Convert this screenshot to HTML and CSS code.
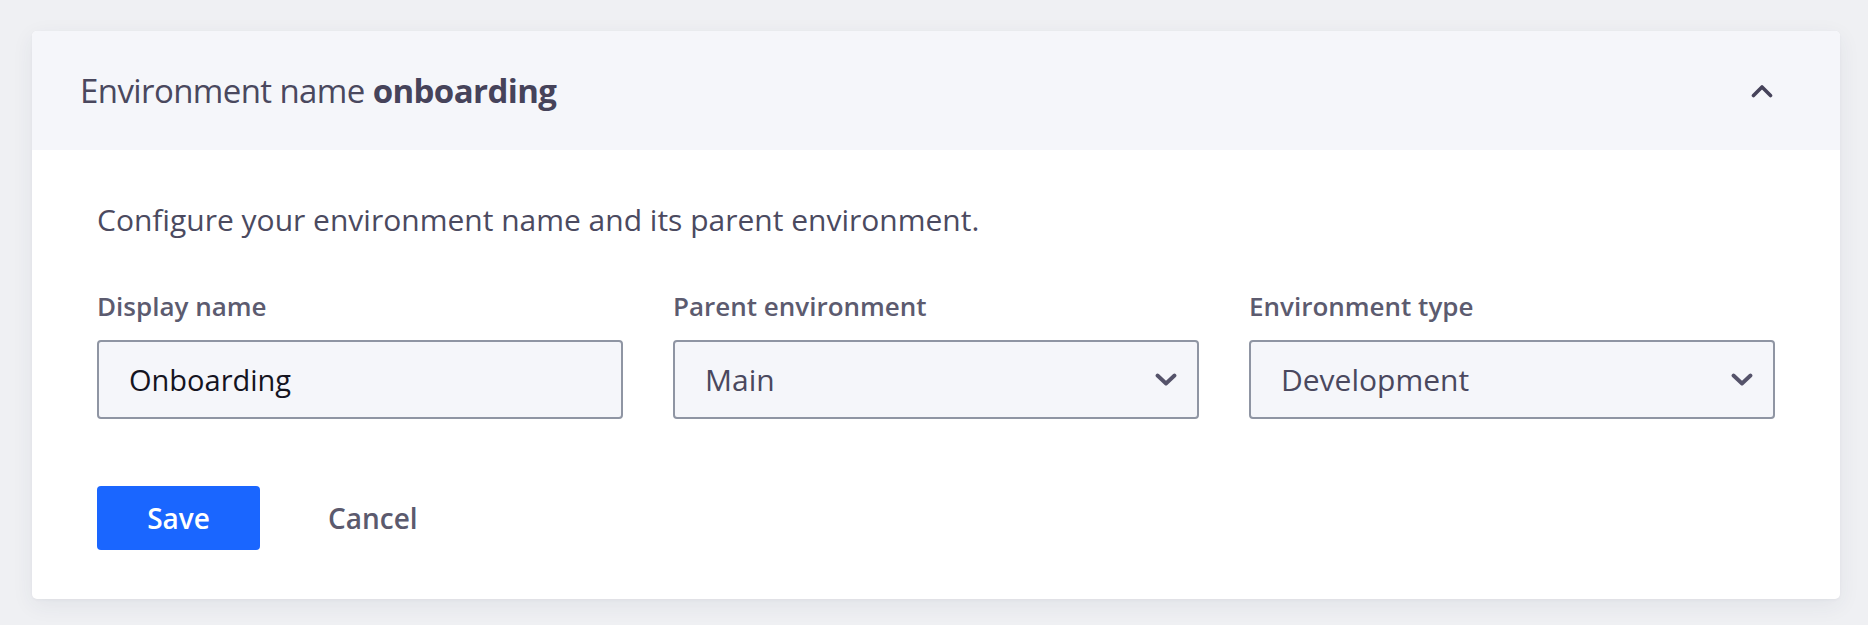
FILE: index.html
```html
<!DOCTYPE html>
<html lang="en">
<head>
<meta charset="utf-8">
<title>Environment settings</title>
<link rel="stylesheet" href="styles.css">
</head>
<body>
<section class="card">
  <header class="card-header">
    <h2 class="title">Environment name <strong>onboarding</strong></h2>
    <svg class="collapse-icon" width="22" height="14" viewBox="0 0 22 14" aria-hidden="true">
      <path d="M2.5 11.5 L11 3 L19.5 11.5" fill="none" stroke="#46435a" stroke-width="3.6" stroke-linecap="round" stroke-linejoin="round"/>
    </svg>
  </header>
  <div class="card-body">
    <p class="description">Configure your environment name and its parent environment.</p>
    <div class="fields">
      <div class="field">
        <div class="label">Display name</div>
        <div class="control input">Onboarding</div>
      </div>
      <div class="field">
        <div class="label">Parent environment</div>
        <div class="control select">
          <span>Main</span>
          <svg class="select-icon" width="22" height="14" viewBox="0 0 22 14" aria-hidden="true">
            <path d="M2.5 2.5 L11 10.5 L19.5 2.5" fill="none" stroke="#55536a" stroke-width="3.8" stroke-linecap="round" stroke-linejoin="round"/>
          </svg>
        </div>
      </div>
      <div class="field">
        <div class="label">Environment type</div>
        <div class="control select">
          <span>Development</span>
          <svg class="select-icon" width="22" height="14" viewBox="0 0 22 14" aria-hidden="true">
            <path d="M2.5 2.5 L11 10.5 L19.5 2.5" fill="none" stroke="#55536a" stroke-width="3.8" stroke-linecap="round" stroke-linejoin="round"/>
          </svg>
        </div>
      </div>
    </div>
    <div class="actions">
      <button class="btn btn-primary" type="button">Save</button>
      <button class="btn btn-link" type="button">Cancel</button>
    </div>
  </div>
</section>
</body>
</html>
```

FILE: styles.css
```css
html, body {
  margin: 0;
  padding: 0;
}

body {
  background: #eff0f3;
  font-family: "Open Sans", "Noto Sans", sans-serif;
  color: #4a485e;
  height: 625px;
  overflow: hidden;
}

.card {
  margin: 31px 28px 0 32px;
  background: #ffffff;
  border-radius: 5px;
  box-shadow: 0 6px 22px rgba(40, 50, 80, 0.07), 0 1px 3px rgba(40, 50, 80, 0.04);
  overflow: hidden;
}

.card-header {
  height: 119px;
  box-sizing: border-box;
  background: #f5f6fa;
  display: flex;
  align-items: center;
  justify-content: space-between;
  padding: 0 67px 0 48px;
}

.title {
  margin: 0;
  font-size: 33px;
  line-height: 44px;
  font-weight: 400;
  letter-spacing: -0.6px;
  color: #4a485e;
}

.title strong {
  font-weight: 700;
  color: #46435a;
}

.collapse-icon {
  display: block;
}

.card-body {
  padding: 50px 65px 49px 65px;
}

.description {
  margin: 0;
  font-size: 30px;
  line-height: 40px;
  color: #4b4a5f;
}

.fields {
  display: grid;
  grid-template-columns: repeat(3, 1fr);
  column-gap: 50px;
  margin-top: 48px;
}

.field {
  display: flex;
  flex-direction: column;
  gap: 16px;
}

.label {
  font-size: 26px;
  line-height: 36px;
  font-weight: 600;
  color: #5c5b6f;
}

.control {
  height: 79px;
  box-sizing: border-box;
  border: 2px solid #8f95a3;
  border-radius: 4px;
  background: #f5f6fa;
  padding: 0 20px 0 30px;
  display: flex;
  align-items: center;
  font-size: 30px;
  line-height: 40px;
}

.input {
  color: #15141f;
  font-size: 29px;
}

.select {
  justify-content: space-between;
  color: #4a485e;
}

.select-icon {
  display: block;
}

.actions {
  display: flex;
  align-items: center;
  gap: 18px;
  margin-top: 67px;
}

.btn {
  font-family: "Open Sans", "Noto Sans", sans-serif;
  font-size: 28px;
  font-weight: 600;
  height: 64px;
  border: none;
  border-radius: 4px;
  cursor: pointer;
  padding: 0 50px;
  line-height: 38px;
}

.btn-primary {
  background: #1a66ff;
  color: #ffffff;
  width: 163px;
  padding: 0;
}

.btn-link {
  background: transparent;
  color: #5b5a6e;
}
```
